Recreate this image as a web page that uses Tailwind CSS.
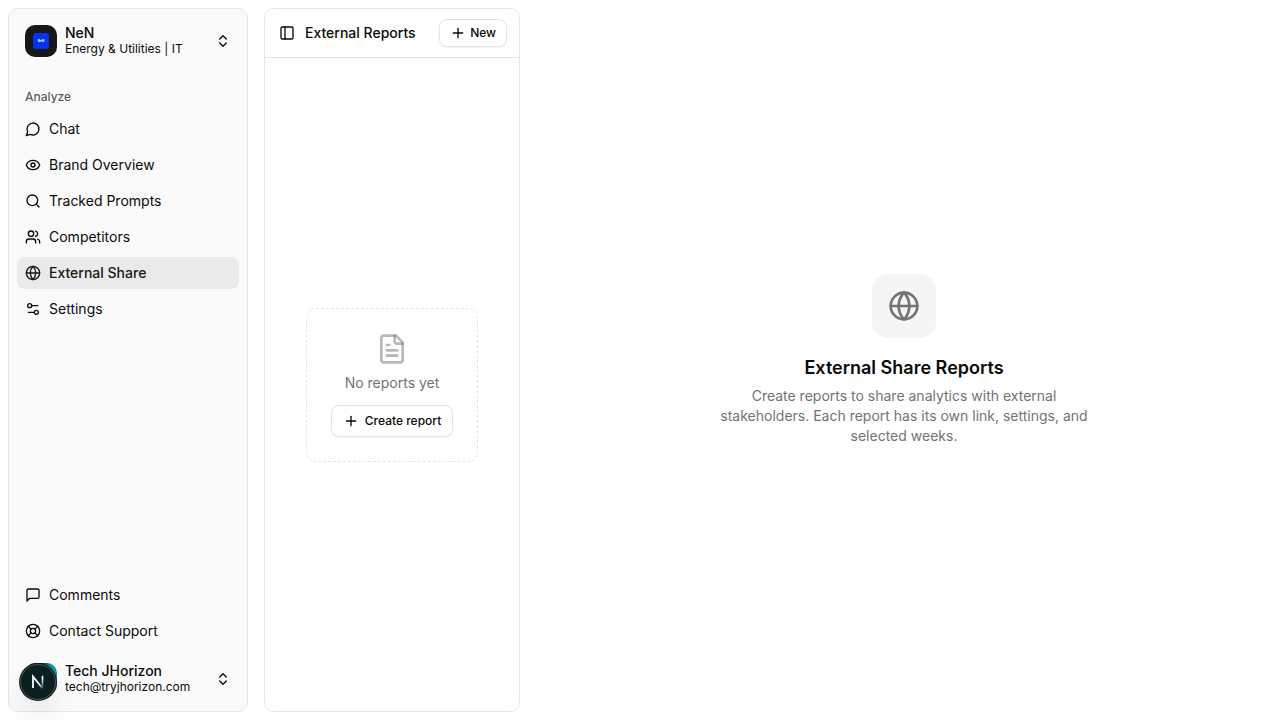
<!DOCTYPE html>
<html lang="en">
<head>
  <meta charset="UTF-8">
  <title>External Reports</title>
  <meta name="viewport" content="width=device-width, initial-scale=1" />
  <script src="https://cdn.jsdelivr.net/npm/@tailwindcss/browser@4"></script>
</head>
<body class="flex h-screen bg-white font-['Inter',sans-serif] text-sm text-neutral-950">

  <!-- Icon sprite -->
  <svg class="hidden" aria-hidden="true">
    <symbol id="chat" viewBox="0 0 24 24"><path d="M7.9 20A9 9 0 1 0 4 16.1L2 22Z"/></symbol>
    <symbol id="eye" viewBox="0 0 24 24"><path d="M2.062 12.348a1 1 0 0 1 0-.696 10.75 10.75 0 0 1 19.876 0 1 1 0 0 1 0 .696 10.75 10.75 0 0 1-19.876 0"/><circle cx="12" cy="12" r="3"/></symbol>
    <symbol id="search" viewBox="0 0 24 24"><circle cx="11" cy="11" r="8"/><path d="m21 21-4.3-4.3"/></symbol>
    <symbol id="users" viewBox="0 0 24 24"><path d="M16 21v-2a4 4 0 0 0-4-4H6a4 4 0 0 0-4 4v2"/><path d="M16 3.128a4 4 0 0 1 0 7.744"/><path d="M22 21v-2a4 4 0 0 0-3-3.87"/><circle cx="9" cy="7" r="4"/></symbol>
    <symbol id="globe" viewBox="0 0 24 24"><circle cx="12" cy="12" r="10"/><path d="M12 2a14.5 14.5 0 0 0 0 20 14.5 14.5 0 0 0 0-20"/><path d="M2 12h20"/></symbol>
    <symbol id="settings" viewBox="0 0 24 24"><path d="M14 17H5"/><path d="M19 7h-9"/><circle cx="17" cy="17" r="3"/><circle cx="7" cy="7" r="3"/></symbol>
    <symbol id="comment" viewBox="0 0 24 24"><path d="M21 15a2 2 0 0 1-2 2H7l-4 4V5a2 2 0 0 1 2-2h14a2 2 0 0 1 2 2z"/></symbol>
    <symbol id="support" viewBox="0 0 24 24"><circle cx="12" cy="12" r="10"/><path d="m4.93 4.93 4.24 4.24"/><path d="m14.83 9.17 4.24-4.24"/><path d="m14.83 14.83 4.24 4.24"/><path d="m9.17 14.83-4.24 4.24"/><circle cx="12" cy="12" r="4"/></symbol>
    <symbol id="chevrons" viewBox="0 0 24 24"><path d="m7 15 5 5 5-5"/><path d="m7 9 5-5 5 5"/></symbol>
    <symbol id="panel" viewBox="0 0 24 24"><rect width="18" height="18" x="3" y="3" rx="2"/><path d="M9 3v18"/></symbol>
    <symbol id="plus" viewBox="0 0 24 24"><path d="M5 12h14"/><path d="M12 5v14"/></symbol>
    <symbol id="file" viewBox="0 0 24 24"><path d="M15 2H6a2 2 0 0 0-2 2v16a2 2 0 0 0 2 2h12a2 2 0 0 0 2-2V7Z"/><path d="M14 2v4a2 2 0 0 0 2 2h4"/><path d="M10 9H8"/><path d="M16 13H8"/><path d="M16 17H8"/></symbol>
  </svg>

  <!-- Sidebar -->
  <aside class="my-2 ml-2 flex w-60 shrink-0 flex-col rounded-[10px] border border-neutral-200 bg-neutral-50 p-2">
    <button class="flex h-12 items-center gap-2 rounded-md p-2 text-left">
      <span class="flex size-8 shrink-0 items-center justify-center rounded-[10px] bg-neutral-900">
        <svg class="size-4" viewBox="0 0 16 16">
          <rect width="16" height="16" rx="3" fill="#0433f5"/>
          <text x="8" y="9" text-anchor="middle" font-size="3" font-weight="700" fill="#fff">NeN</text>
        </svg>
      </span>
      <span class="grid flex-1">
        <span class="truncate leading-4 font-medium">NeN</span>
        <span class="truncate text-xs leading-4">Energy &amp; Utilities | IT</span>
      </span>
      <svg class="size-4 fill-none stroke-current stroke-2" stroke-linecap="round" stroke-linejoin="round"><use href="#chevrons"/></svg>
    </button>

    <h2 class="mt-4 flex h-8 items-center px-2 text-xs font-medium text-neutral-950/70">Analyze</h2>
    <nav class="flex flex-1 flex-col gap-1">
      <a href="#" class="flex h-8 items-center gap-2 rounded-lg px-2"><svg class="size-4 fill-none stroke-current stroke-2" stroke-linecap="round" stroke-linejoin="round"><use href="#chat"/></svg>Chat</a>
      <a href="#" class="flex h-8 items-center gap-2 rounded-lg px-2"><svg class="size-4 fill-none stroke-current stroke-2" stroke-linecap="round" stroke-linejoin="round"><use href="#eye"/></svg>Brand Overview</a>
      <a href="#" class="flex h-8 items-center gap-2 rounded-lg px-2"><svg class="size-4 fill-none stroke-current stroke-2" stroke-linecap="round" stroke-linejoin="round"><use href="#search"/></svg>Tracked Prompts</a>
      <a href="#" class="flex h-8 items-center gap-2 rounded-lg px-2"><svg class="size-4 fill-none stroke-current stroke-2" stroke-linecap="round" stroke-linejoin="round"><use href="#users"/></svg>Competitors</a>
      <a href="#" aria-current="page" class="flex h-8 items-center gap-2 rounded-lg bg-[#eaeaea] px-2 font-medium text-neutral-900"><svg class="size-4 fill-none stroke-current stroke-2" stroke-linecap="round" stroke-linejoin="round"><use href="#globe"/></svg>External Share</a>
      <a href="#" class="flex h-8 items-center gap-2 rounded-lg px-2"><svg class="size-4 fill-none stroke-current stroke-2" stroke-linecap="round" stroke-linejoin="round"><use href="#settings"/></svg>Settings</a>
      <a href="#" class="mt-auto flex h-8 items-center gap-2 rounded-lg px-2"><svg class="size-4 fill-none stroke-current stroke-2" stroke-linecap="round" stroke-linejoin="round"><use href="#comment"/></svg>Comments</a>
      <a href="#" class="flex h-8 items-center gap-2 rounded-lg px-2"><svg class="size-4 fill-none stroke-current stroke-2" stroke-linecap="round" stroke-linejoin="round"><use href="#support"/></svg>Contact Support</a>
    </nav>

    <button class="mt-2 flex h-12 items-center gap-2 rounded-md p-2 text-left">
      <span class="size-8 shrink-0 rounded-[10px] bg-linear-to-r from-[#08201f] from-50% to-[#0796a6] to-80%"></span>
      <span class="grid flex-1">
        <span class="truncate leading-4 font-medium">Tech JHorizon</span>
        <span class="truncate text-xs leading-4">tech@tryjhorizon.com</span>
      </span>
      <svg class="size-4 fill-none stroke-current stroke-2" stroke-linecap="round" stroke-linejoin="round"><use href="#chevrons"/></svg>
    </button>
  </aside>

  <!-- Reports panel -->
  <section class="my-2 ml-4 flex w-64 shrink-0 flex-col rounded-[10px] border border-neutral-200">
    <header class="flex h-[49px] items-center gap-1 border-b border-neutral-200 pr-3 pl-2">
      <button aria-label="Toggle sidebar" class="flex size-7 items-center justify-center rounded-md"><svg class="size-4 fill-none stroke-current stroke-2" stroke-linecap="round" stroke-linejoin="round"><use href="#panel"/></svg></button>
      <h2 class="flex-1 font-medium">External Reports</h2>
      <button class="flex h-7 items-center gap-1 rounded-lg border border-neutral-200 bg-white px-2.5 text-xs font-medium shadow-xs"><svg class="size-4 fill-none stroke-current stroke-2" stroke-linecap="round" stroke-linejoin="round"><use href="#plus"/></svg>New</button>
    </header>
    <div class="flex flex-1 items-center justify-center">
      <div class="flex flex-col items-center rounded-[10px] border border-dashed border-neutral-200 p-6">
        <svg class="size-8 fill-none stroke-current stroke-2 text-neutral-500/50" stroke-linecap="round" stroke-linejoin="round"><use href="#file"/></svg>
        <p class="mt-2 text-neutral-500">No reports yet</p>
        <button class="mt-3 flex h-8 items-center gap-1.5 rounded-lg border border-neutral-200 bg-white px-[11px] text-xs font-medium shadow-xs"><svg class="size-4 fill-none stroke-current stroke-2" stroke-linecap="round" stroke-linejoin="round"><use href="#plus"/></svg>Create report</button>
      </div>
    </div>
  </section>

  <main class="ml-2 flex flex-1 flex-col items-center justify-center text-center">
    <div class="flex size-16 items-center justify-center rounded-2xl bg-neutral-100 text-neutral-500">
      <svg class="size-8 fill-none stroke-current stroke-2" stroke-linecap="round" stroke-linejoin="round"><use href="#globe"/></svg>
    </div>
    <h1 class="mt-4 text-lg font-semibold">External Share Reports</h1>
    <p class="mt-1 max-w-sm text-neutral-500">Create reports to share analytics with external stakeholders. Each report has its own link, settings, and selected weeks.</p>
  </main>

  <!-- Dev tools badge -->
  <button aria-label="Open dev tools" class="fixed bottom-5 left-5 flex size-9 items-center justify-center rounded-full border border-[#4a5558] bg-[#08201f] shadow-[0_0_0_1px_#171717,0_16px_32px_-8px_rgb(0_0_0/0.24)]">
    <svg class="size-9 shrink-0 fill-none" viewBox="0 0 36 36">
      <defs>
        <linearGradient id="fade-a" x1="14" y1="14" x2="23" y2="25" gradientUnits="userSpaceOnUse"><stop offset="0.6" stop-color="#fff"/><stop offset="1" stop-color="#fff" stop-opacity="0"/></linearGradient>
        <linearGradient id="fade-b" x1="22" y1="12" x2="22" y2="24" gradientUnits="userSpaceOnUse"><stop offset="0.2" stop-color="#fff"/><stop offset="1" stop-color="#fff" stop-opacity="0"/></linearGradient>
      </defs>
      <path d="M13 24V12.500L23 25" stroke="url(#fade-a)" stroke-width="1.800"/>
      <path d="M22 12h1v12h-1z" fill="url(#fade-b)" stroke="url(#fade-b)" stroke-width=".6"/>
    </svg>
  </button>

</body>
</html>
